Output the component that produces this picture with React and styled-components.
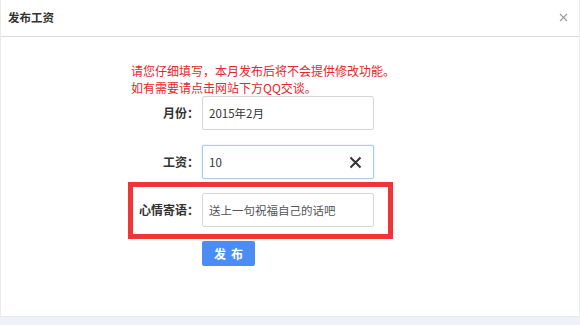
import React from "react";
import styled, { createGlobalStyle } from "styled-components";

const GlobalStyle = createGlobalStyle`
    html, body {
        margin: 0;
        padding: 0;
        background: #eef2f8;
        font-family: "Noto Sans CJK SC", sans-serif;
        text-spacing-trim: space-all;
    }
`
const Modal = styled.div`
    width: 580px;
    height: 317px;
    box-sizing: border-box;
    background: #fff;
    border: 1px solid #e6ebf1;
    border-top: none;
    display: flex;
    flex-direction: column;
`
const Header = styled.header`
    height: 37px;
    box-sizing: border-box;
    border-bottom: 1px solid #dcdcdc;
    display: flex;
    align-items: center;
    justify-content: space-between;
    padding: 0 9px 0 7px;
`
const Title = styled.h3`
    margin: 0;
    font-size: 11.5px;
    font-weight: bold;
    color: #333;
    padding-bottom: 2px;
`
const Close = styled.button`
    border: none;
    background: none;
    padding: 0;
    width: 14px;
    height: 14px;
    display: flex;
    align-items: center;
    justify-content: center;
    margin-bottom: 1px;
`
const Body = styled.div`
    padding: 25px 0 0 128px;
    display: flex;
    flex-direction: column;
    align-items: flex-start;
`
const Notice = styled.p`
    margin: 0 0 0 2px;
    color: #e5262a;
    font-size: 12px;
    line-height: 17px;
`
const Row = styled.div`
    display: flex;
    align-items: center;
    margin-top: ${props => props.$gap || 0}px;
    ${props => props.$highlight && `
        border: 5px solid #ef3535;
        margin-left: -1px;
        padding: 6px 14px 7px 0;
    `}
`
const Label = styled.label`
    width: ${props => props.$width || 70}px;
    text-align: right;
    font-size: 12px;
    font-weight: bold;
    color: #333;
    margin-right: 3px;
    white-space: nowrap;
    padding-bottom: 2px;
`
const InputWrap = styled.div`
    position: relative;
    display: flex;
`
const Input = styled.input`
    width: 172px;
    height: 34px;
    box-sizing: border-box;
    border: 1px solid ${props => props.$focus ? "#a9cdea" : "#d6d6d6"};
    box-shadow: ${props => props.$focus ? "0 0 2px rgba(120,170,220,0.4)" : "none"};
    border-radius: 2px;
    padding: 0 6px;
    font-family: inherit;
    font-size: 11.5px;
    color: #333;
    outline: none;
    &::placeholder {
        color: #555;
    }
`
const ClearIcon = styled.span`
    position: absolute;
    right: 12px;
    top: 11px;
    width: 13px;
    height: 13px;
    display: flex;
`
const Submit = styled.button`
    margin: 2px 0 0 73px;
    width: 53px;
    height: 25px;
    border: none;
    border-radius: 2px;
    background: #4b8df5;
    color: #fff;
    font-family: inherit;
    font-size: 12px;
    font-weight: bold;
    letter-spacing: 5px;
    padding: 0 0 0 5px;
`

export default function App() {
    return (
        <>
            <GlobalStyle />
            <Modal lang="zh-CN">
                <Header>
                    <Title>发布工资</Title>
                    <Close aria-label="关闭">
                        <svg width="9" height="9" viewBox="0 0 9 9">
                            <path d="M1 1L8 8M8 1L1 8" stroke="#9a9a9a" strokeWidth="1.1" />
                        </svg>
                    </Close>
                </Header>
                <Body>
                    <Notice>
                        请您仔细填写，本月发布后将不会提供修改功能。<br />
                        如有需要请点击网站下方QQ交谈。
                    </Notice>
                    <Row>
                        <Label>月份：</Label>
                        <Input defaultValue="2015年2月" />
                    </Row>
                    <Row $gap={15}>
                        <Label>工资：</Label>
                        <InputWrap>
                            <Input $focus defaultValue="10" />
                            <ClearIcon>
                                <svg width="13" height="13" viewBox="0 0 13 13">
                                    <path d="M1.5 1.5L11.5 11.5M11.5 1.5L1.5 11.5" stroke="#333" strokeWidth="2" />
                                </svg>
                            </ClearIcon>
                        </InputWrap>
                    </Row>
                    <Row $gap={3} $highlight>
                        <Label $width={66}>心情寄语：</Label>
                        <Input placeholder="送上一句祝福自己的话吧" />
                    </Row>
                    <Submit>发布</Submit>
                </Body>
            </Modal>
        </>
    )
}
